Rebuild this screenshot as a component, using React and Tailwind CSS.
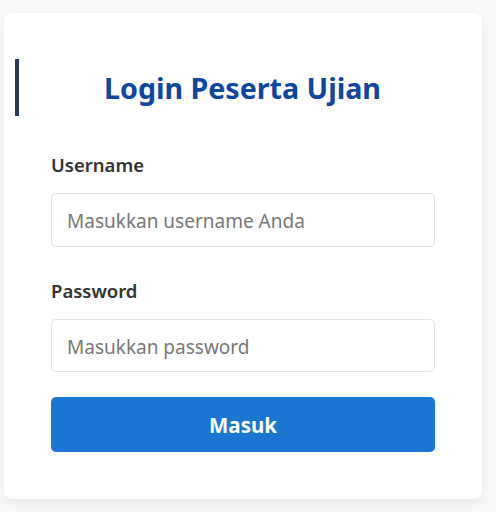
import React from "react";

export default function App() {
  return (
    <div className="w-[496px] h-[512px] bg-[#f7f8f9] pt-[13px] pl-[4px]" style={{ fontFamily: '"Noto Sans", "Open Sans", sans-serif' }}>
      <div className="w-[478px] h-[486px] bg-white rounded-[8px] shadow-[0_4px_12px_rgba(0,0,0,0.06)] px-[47px] pt-[46px] flex flex-col">
        <h2 className="-mx-[36px] h-[57px] border-l-4 border-[#2c3e50] flex items-center justify-center text-[28.6px] font-bold text-[#0d47a1] leading-none pt-[1px] pr-[5px]">
          Login Peserta Ujian
        </h2>
        <label className="mt-[37px] block text-[18.5px] leading-[24px] font-semibold text-[#333]">Username</label>
        <div className="mt-[16px] h-[54px] border border-[#e2e2e2] rounded-[5px] flex items-center px-[15px] pt-[3px] text-[19px] text-[#777]">
          Masukkan username Anda
        </div>
        <label className="mt-[32px] block text-[18.5px] leading-[24px] font-semibold text-[#333]">Password</label>
        <div className="mt-[16px] h-[53px] border border-[#e2e2e2] rounded-[5px] flex items-center px-[15px] pt-[3px] text-[19px] text-[#777]">
          Masukkan password
        </div>
        <button className="mt-[25px] h-[55px] w-full rounded-[5px] bg-[#1976d2] text-white text-[20.5px] font-bold pt-[1px]">
          Masuk
        </button>
      </div>
    </div>
  );
}
